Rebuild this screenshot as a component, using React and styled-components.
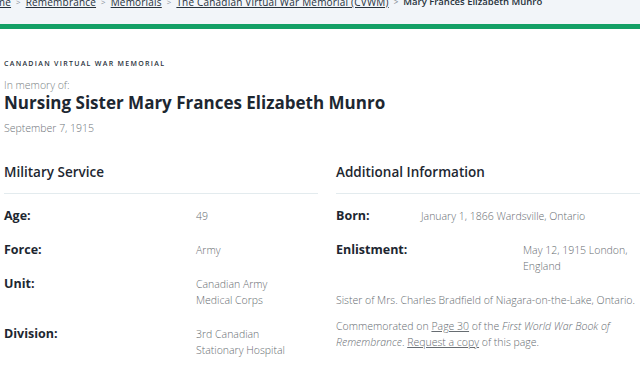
import React from 'react'
import styled, { createGlobalStyle } from 'styled-components'

const GlobalStyle = createGlobalStyle`
  html, body {
    margin: 0;
    padding: 0;
    background: #fff;
    font-family: "Open Sans", "Noto Sans", sans-serif;
    color: #1d2731;
  }
`

const Page = styled.div`
  width: 640px;
  height: 385px;
  overflow: hidden;
`

const Crumbs = styled.nav`
  height: 24px;
  background: #f2f5f9;
  border-bottom: 5px solid #14a066;
  overflow: hidden;
`

const CrumbList = styled.ol`
  display: flex;
  align-items: center;
  gap: 5px;
  list-style: none;
  margin: -5px 0 0 -18px;
  padding: 0;
  font-size: 10px;
  line-height: 14px;
  white-space: nowrap;
`

const Crumb = styled.li`
  display: flex;
  align-items: center;
  gap: 5px;
  color: #26313b;
  font-weight: ${p => (p.$current ? 600 : 400)};
  font-size: ${p => (p.$current ? '9.5px' : '10px')};
  a {
    color: #26313b;
    text-decoration: underline;
    letter-spacing: 0.2px;
  }
`

const Sep = styled.span`
  color: #8a949c;
  font-size: 8px;
`

const Main = styled.main`
  padding: 30px 0 0 4px;
`

const Kicker = styled.div`
  font-size: 7px;
  font-weight: 600;
  letter-spacing: 1.3px;
  text-transform: uppercase;
  color: #2a333c;
  line-height: 10px;
`

const Memory = styled.div`
  margin-top: 9px;
  font-size: 10.5px;
  font-weight: 300;
  color: #7a7f84;
  line-height: 14px;
`

const Name = styled.h1`
  margin: 0;
  font-size: 17px;
  font-weight: 700;
  line-height: 22px;
  color: #1d2731;
`

const Date = styled.div`
  margin-top: 7px;
  font-size: 10.5px;
  font-weight: 300;
  color: #6f757a;
  line-height: 14px;
`

const Columns = styled.div`
  display: grid;
  grid-template-columns: 314px 320px;
  column-gap: 18px;
  margin-top: 29px;
`

const Section = styled.section``

const SectionTitle = styled.h2`
  margin: 0;
  padding-bottom: 13px;
  font-size: 13.5px;
  font-weight: 600;
  line-height: 16px;
  border-bottom: 1.5px solid #e3ebee;
`

const Rows = styled.div`
  padding-top: 14px;
`

const Row = styled.div`
  display: flex;
  padding-bottom: 18px;
`

const Label = styled.div`
  flex: 0 0 ${p => p.$w}px;
  font-size: 12.5px;
  font-weight: 700;
  line-height: 16px;
  color: #1d2731;
`

const Value = styled.div`
  font-size: 10.5px;
  font-weight: 300;
  line-height: 16px;
  color: #676d72;
  width: ${p => p.$vw || 'auto'};
`

const Note = styled.p`
  margin: 0 0 10px;
  font-size: 10.5px;
  font-weight: 300;
  line-height: 16px;
  color: #676d72;
  a {
    color: #676d72;
    text-decoration: underline;
  }
  em {
    font-style: italic;
  }
`

const military = [
  { label: 'Age:', value: '49' },
  { label: 'Force:', value: 'Army' },
  { label: 'Unit:', value: ['Canadian Army', 'Medical Corps'] },
  { label: 'Division:', value: ['3rd Canadian', 'Stationary Hospital'] },
]

function Lines({ value }) {
  if (Array.isArray(value)) {
    return value.map((v, i) => <div key={i}>{v}</div>)
  }
  return value
}

export default function App() {
  return (
    <Page>
      <GlobalStyle />
      <Crumbs>
        <CrumbList>
          <Crumb><a href="#">Home</a></Crumb>
          <Crumb><Sep>&gt;</Sep><a href="#">Remembrance</a></Crumb>
          <Crumb><Sep>&gt;</Sep><a href="#">Memorials</a></Crumb>
          <Crumb><Sep>&gt;</Sep><a href="#">The Canadian Virtual War Memorial (CVWM)</a></Crumb>
          <Crumb $current><Sep>&gt;</Sep>Mary Frances Elizabeth Munro</Crumb>
        </CrumbList>
      </Crumbs>
      <Main>
        <Kicker>Canadian Virtual War Memorial</Kicker>
        <Memory>In memory of:</Memory>
        <Name>Nursing Sister Mary Frances Elizabeth Munro</Name>
        <Date>September 7, 1915</Date>
        <Columns>
          <Section>
            <SectionTitle>Military Service</SectionTitle>
            <Rows>
              {military.map(r => (
                <Row key={r.label}>
                  <Label $w={192}>{r.label}</Label>
                  <Value><Lines value={r.value} /></Value>
                </Row>
              ))}
            </Rows>
          </Section>
          <Section>
            <SectionTitle>Additional Information</SectionTitle>
            <Rows>
              <Row>
                <Label $w={85}>Born:</Label>
                <Value>January 1, 1866 Wardsville, Ontario</Value>
              </Row>
              <Row>
                <Label $w={187}>Enlistment:</Label>
                <Value $vw="112px">May 12, 1915 London, England</Value>
              </Row>
              <Note>Sister of Mrs. Charles Bradfield of Niagara-on-the-Lake, Ontario.</Note>
              <Note>
                Commemorated on <a href="#">Page 30</a> of the <em>First World War Book of Remembrance</em>.{' '}
                <a href="#">Request a copy</a> of this page.
              </Note>
            </Rows>
          </Section>
        </Columns>
      </Main>
    </Page>
  )
}
